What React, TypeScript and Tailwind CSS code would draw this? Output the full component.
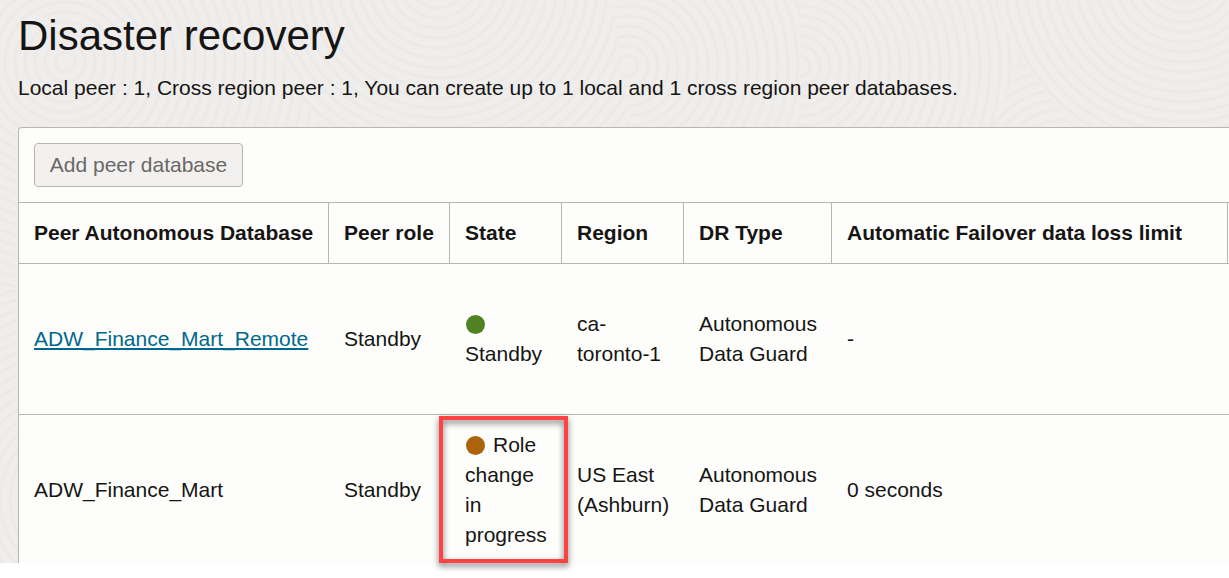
import type { ReactNode } from "react";

const RING_STEP = 10;

type RingSet = { cx: number; cy: number; count: number; clip: string };

const ringSets: RingSet[] = [
  { cx: 65, cy: 62, count: 27, clip: "0,0 250,0 320,130 320,290 0,290" },
  { cx: 438, cy: -22, count: 24, clip: "250,0 610,0 632,130 320,130" },
  { cx: 628, cy: 66, count: 20, clip: "610,0 800,0 800,130 632,130" },
  { cx: 800, cy: 66, count: 22, clip: "800,0 990,0 1022,60 990,130 800,130" },
  { cx: 1184, cy: -28, count: 26, clip: "990,0 1229,0 1229,130 1075,130 1022,60" },
  { cx: 1060, cy: 170, count: 14, clip: "1022,60 1075,130 990,130" },
  { cx: 80, cy: 500, count: 24, clip: "0,290 18,290 18,563 0,563" },
];

function Backdrop() {
  return (
    <svg className="absolute inset-0 -z-10" width="1229" height="563" fill="none" aria-hidden="true">
      {ringSets.map((set, i) => (
        <g key={i}>
          <clipPath id={`rings-${i}`}>
            <polygon points={set.clip} />
          </clipPath>
          <g clipPath={`url(#rings-${i})`} stroke="#ebeae9" strokeWidth="3">
            {Array.from({ length: set.count }, (_, n) => (
              <circle key={n} cx={set.cx} cy={set.cy} r={(n + 1) * RING_STEP} />
            ))}
          </g>
        </g>
      ))}
    </svg>
  );
}

function HeaderCell({ children }: { children?: ReactNode }) {
  return (
    <th className="h-[61px] border-r border-b border-[#bab5b0] px-[15px] py-0 text-left align-middle font-bold">
      {children}
    </th>
  );
}

function Cell({ children }: { children?: ReactNode }) {
  return <td className="px-[15px] py-0 align-middle">{children}</td>;
}

function Dot({ className }: { className: string }) {
  return <span className={`ml-px inline-block size-[19px] rounded-full align-[-3px] ${className}`} />;
}

export default function App() {
  return (
    <div className="relative h-[578px] w-[1229px] overflow-hidden bg-white font-['Liberation_Sans',Arial,sans-serif] text-[21px] leading-[30px] whitespace-nowrap text-[#161513]">
      <main className="relative isolate h-[563px] overflow-hidden bg-[#efeeed] pl-[18px]">
        <Backdrop />
        <h1 className="pt-[11px] text-[42px] leading-[50px]">Disaster recovery</h1>
        <p className="mt-3">
          Local peer : 1, Cross region peer : 1, You can create up to 1 local and 1 cross region peer databases.
        </p>
        <section className="mt-6 h-[450px] w-[1300px] rounded-tl-[4px] border-t border-l border-[#bab5b0] bg-[#fdfdfc]">
          <div className="flex h-[75px] items-start border-b border-[#bab5b0] px-[15px] pt-[15px]">
            <button
              disabled
              className="h-11 w-[209px] rounded-[4px] border border-[#bab5b0] bg-[#f3f1f0] text-[#6a6967]"
            >
              Add peer database
            </button>
          </div>
          <table className="w-[1281px] table-fixed border-separate border-spacing-0">
            <colgroup>
              <col className="w-[310px]" />
              <col className="w-[121px]" />
              <col className="w-[112px]" />
              <col className="w-[122px]" />
              <col className="w-[148px]" />
              <col className="w-[396px]" />
              <col className="w-[72px]" />
            </colgroup>
            <thead>
              <tr>
                <HeaderCell>Peer Autonomous Database</HeaderCell>
                <HeaderCell>Peer role</HeaderCell>
                <HeaderCell>State</HeaderCell>
                <HeaderCell>Region</HeaderCell>
                <HeaderCell>DR Type</HeaderCell>
                <HeaderCell>Automatic Failover data loss limit</HeaderCell>
                <HeaderCell />
              </tr>
            </thead>
            <tbody>
              <tr className="h-[151px] [&>td]:border-b [&>td]:border-[#bab5b0]">
                <Cell>
                  <a
                    href="#"
                    className="text-[#00688c] underline decoration-2 underline-offset-[2px] [text-decoration-skip-ink:none]"
                  >
                    ADW_Finance_Mart_Remote
                  </a>
                </Cell>
                <Cell>Standby</Cell>
                <Cell>
                  <Dot className="bg-[#508223]" />
                  <br />
                  Standby
                </Cell>
                <Cell>
                  ca-
                  <br />
                  toronto-1
                </Cell>
                <Cell>
                  Autonomous
                  <br />
                  Data Guard
                </Cell>
                <Cell>-</Cell>
                <Cell />
              </tr>
              <tr className="h-[150px]">
                <Cell>ADW_Finance_Mart</Cell>
                <Cell>Standby</Cell>
                <Cell>
                  <Dot className="mr-2 bg-[#ac630c]" />
                  Role
                  <br />
                  change
                  <br />
                  in
                  <br />
                  progress
                </Cell>
                <Cell>
                  US East
                  <br />
                  (Ashburn)
                </Cell>
                <Cell>
                  Autonomous
                  <br />
                  Data Guard
                </Cell>
                <Cell>0 seconds</Cell>
                <Cell />
              </tr>
            </tbody>
          </table>
        </section>
      </main>
      <div className="pointer-events-none absolute top-[416px] left-[439px] h-[147px] w-[129px] border-4 border-[#ff4343] [filter:drop-shadow(0_3px_3px_rgba(0,0,0,0.55))]" />
    </div>
  );
}
